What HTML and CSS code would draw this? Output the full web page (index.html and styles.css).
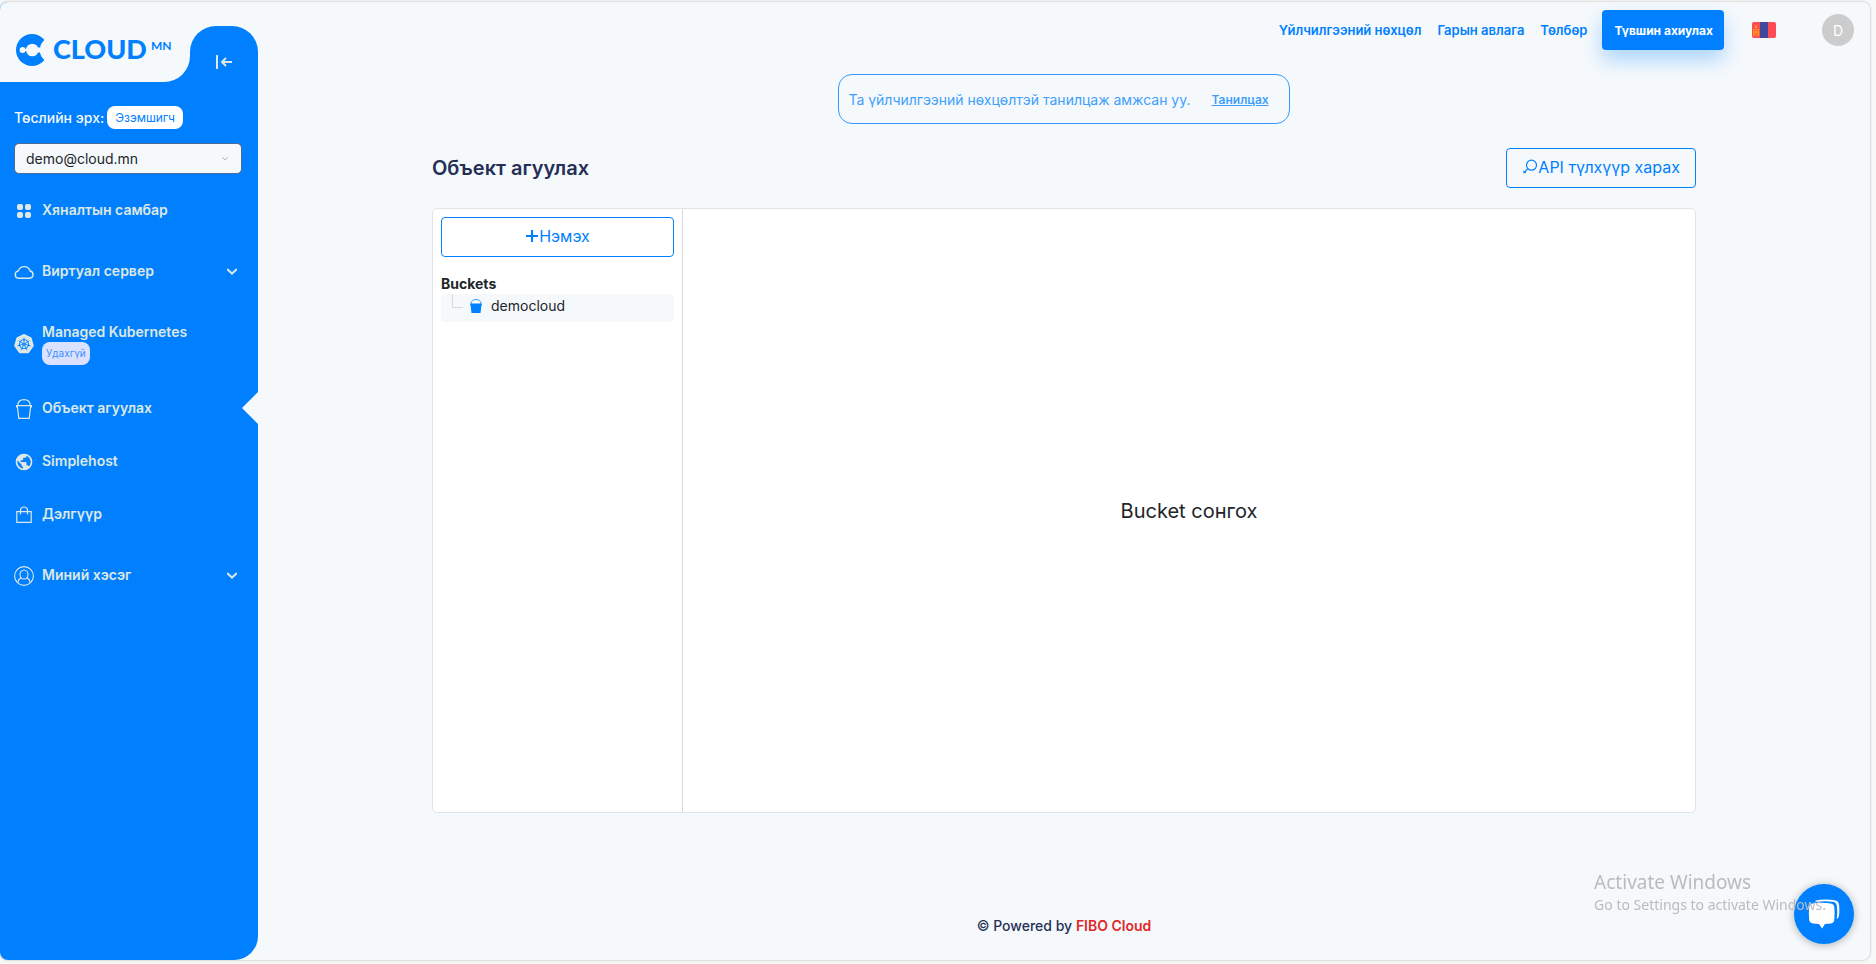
FILE: index.html
```html
<!DOCTYPE html>
<html lang="mn">
<head>
<meta charset="utf-8">
<meta name="viewport" content="width=device-width, initial-scale=1">
<title>Объект агуулах – Cloud.mn</title>
<link rel="stylesheet" href="styles.css">
</head>
<body>
<div class="frame">
  <aside class="sidebar">
    <div class="brand-row">
      <div class="brand-wrap">
        <a class="brand" href="#">
          <svg class="brand-mark" viewBox="0 0 30 32" width="30" height="32" aria-hidden="true">
            <circle cx="16" cy="16" r="16" fill="#0080ff"/>
            <g fill="#f5f9fc"><circle cx="37" cy="16" r="13.200"/><circle cx="16.300" cy="16" r="6.300"/><circle cx="6.600" cy="16" r="3"/><path d="M21 13.500h3v5h-3zM9 15h2v2H9z"/></g>
          </svg>
          <span class="brand-name">CLOUD</span><span class="brand-tld">MN</span>
        </a>
      </div>
      <div class="tab-wrap">
        <button class="collapse" type="button" aria-label="Цэс хураах">
          <svg viewBox="0 0 16 14" width="16" height="14" fill="none" stroke="#dde8e4" stroke-width="2"><path d="M1 0v14M16 7H6M10 3L6 7l4 4"/></svg>
        </button>
      </div>
    </div>
    <div class="side-body">
      <div class="project">
        <div class="role"><span>Төслийн эрх:</span><span class="role-badge">Эзэмшигч</span></div>
        <div class="select-wrap">
          <select class="select" aria-label="Төсөл"><option>demo@cloud.mn</option></select>
          <svg class="select-arrow" viewBox="0 0 8 6" width="8" height="6" fill="none" stroke="#b4b8bc" stroke-width="1"><path d="M1 1l3 3 3-3"/></svg>
        </div>
      </div>
      <nav class="menu">
        <a class="item" href="#">
          <span class="icon"><svg viewBox="0 0 20 20" width="20" height="20" fill="currentColor"><rect x="3" y="3" width="6" height="6" rx="2"/><rect x="11" y="3" width="6" height="6" rx="2"/><rect x="3" y="11" width="6" height="6" rx="2"/><rect x="11" y="11" width="6" height="6" rx="2"/></svg></span>
          <span class="label">Хяналтын самбар</span>
        </a>
        <button class="item item-group" type="button">
          <span class="icon"><svg viewBox="0 0 20 20" width="20" height="20" fill="none" stroke="currentColor" stroke-width="1.400"><path d="M4.500 16.300h11.200a3.700 3.700 0 0 0 .4-7.300 A6.200 6.200 0 0 0 4.300 8.900 A3.750 3.750 0 0 0 4.500 16.300z"/></svg></span>
          <span class="label">Виртуал сервер</span>
          <svg class="chev" viewBox="0 0 10 7" width="10" height="7" fill="none" stroke="currentColor" stroke-width="2"><path d="M0 1l5 4.600L10 1"/></svg>
        </button>
        <a class="item item-tall" href="#">
          <span class="icon"><svg viewBox="0 0 20 20" width="20" height="20"><path fill="currentColor" d="M9.300.3a1.500 1.500 0 0 1 1.400 0l6.200 3a1.500 1.500 0 0 1 .8 1l2 7a1.500 1.500 0 0 1-.3 1.200l-4.400 6.300a1.500 1.500 0 0 1-1.100.5H6.100a1.500 1.500 0 0 1-1.100-.5L.6 12.500a1.500 1.500 0 0 1-.3-1.200l2-7a1.500 1.500 0 0 1 .8-1z"/><g fill="none" stroke="#0080ff" stroke-width="1.100"><circle cx="10" cy="10.300" r="4.500"/><circle cx="10" cy="10.300" r="1"/><path stroke-width=".9" d="M10 9.300V3.600M10.800 9.700l4.500-3M11 10.500l5.500 1.300M10.500 11.200l2.500 5M9.500 11.200l-2.500 5M9 10.500l-5.500 1.300M9.200 9.700l-4.500-3"/></g></svg></span>
          <span class="label">Managed Kubernetes<span class="soon">Удахгүй</span></span>
        </a>
        <a class="item item-active" href="#" aria-current="page">
          <span class="icon"><svg viewBox="0 0 20 20" width="20" height="20" fill="none" stroke="currentColor" stroke-width="1.200"><path d="M2.600 6.600h14.800v1.200h-.8L15.200 19.400H4.800L3.400 7.800h-.8zM3.600 6.400C4 2.600 6.800.6 10 .6s6 2 6.400 5.800"/></svg></span>
          <span class="label">Объект агуулах</span>
        </a>
        <a class="item" href="#">
          <span class="icon"><svg viewBox="0 0 24 24" width="20" height="20" fill="currentColor"><path fill-rule="evenodd" d="M12 2a10 10 0 1 0 0 20 10 10 0 0 0 0-20zM15 4.600A8 8 0 0 1 17.900 17.390C17.600 16.600 16.900 16 16 16h-1v-3a1 1 0 0 0-1-1H8v-2h2a1 1 0 0 0 1-1V7h2a2 2 0 0 0 2-2zM4.200 10.200L9 15v1a2 2 0 0 0 2 2v1.900A8 8 0 0 1 4.200 10.200z"/></svg></span>
          <span class="label">Simplehost</span>
        </a>
        <a class="item" href="#">
          <span class="icon"><svg viewBox="0 0 20 20" width="20" height="20" fill="none" stroke="currentColor" stroke-width="1.200"><path d="M2.800 6.600h14.400v10.800H2.800zM6.500 9.500V5.500a3.500 3.500 0 0 1 7 0V9.500"/></svg></span>
          <span class="label">Дэлгүүр</span>
        </a>
        <button class="item item-group" type="button">
          <span class="icon"><svg viewBox="0 0 20 20" width="20" height="20" fill="none" stroke="currentColor" stroke-width="1.100"><circle cx="10" cy="10" r="9.400"/><ellipse cx="10" cy="8.500" rx="4" ry="4.500"/><path d="M3.800 16.800c.3-2.800 1.800-4.300 3.600-5M16.200 16.800c-.3-2.800-1.800-4.300-3.600-5"/></svg></span>
          <span class="label">Миний хэсэг</span>
          <svg class="chev" viewBox="0 0 10 7" width="10" height="7" fill="none" stroke="currentColor" stroke-width="2"><path d="M0 1l5 4.600L10 1"/></svg>
        </button>
      </nav>
    </div>
  </aside>

  <div class="page">
    <header class="topbar">
      <nav class="links">
        <a href="#">Үйлчилгээний нөхцөл</a>
        <a href="#">Гарын авлага</a>
        <a href="#">Төлбөр</a>
      </nav>
      <button class="upgrade" type="button">Түвшин ахиулах</button>
      <button class="lang" type="button" aria-label="Монгол">
        <svg viewBox="0 0 24 16" width="24" height="16"><rect width="24" height="16" rx="2" fill="#ff4b55"/><rect x="8" width="8" height="16" fill="#41479b"/><g fill="#ff9b0d"><circle cx="4" cy="5" r="1.300"/><path d="M4 2l.8 1.700H3.200zM1 7h1.500v7H1zM5.500 7H7v7H5.500zM3 7h2v1H3zM3 12.500h2v1H3z"/><circle cx="4" cy="10.200" r="1.400"/></g></svg>
      </button>
      <button class="avatar" type="button">D</button>
    </header>

    <main class="content">
      <div class="notice">
        <span>Та үйлчилгээний нөхцөлтэй танилцаж амжсан уу.</span>
        <a href="#">Танилцах</a>
      </div>
      <div class="heading">
        <h1>Объект агуулах</h1>
        <button class="outline" type="button">
          <svg viewBox="0 0 16 16" width="16" height="16" fill="none" stroke="currentColor" stroke-width="1.200"><circle cx="9.500" cy="6.200" r="5"/><path d="M5.900 9.700L1.400 14.200M1.600 12l2.200 2.200"/></svg>API түлхүүр харах
        </button>
      </div>
      <section class="panel">
        <div class="buckets">
          <button class="outline" type="button">
            <svg viewBox="0 0 14 14" width="14" height="14" fill="none" stroke="currentColor" stroke-width="2"><path d="M7 1v12M1 7h12"/></svg>Нэмэх
          </button>
          <h2>Buckets</h2>
          <ul class="tree">
            <li>
              <span class="branch"></span>
              <svg viewBox="0 0 12 14" width="12" height="14"><path fill="none" stroke="#0080ff" stroke-width=".8" d="M1 4.500C1.500 1.500 3.500.5 6 .5s4.500 1 5 4"/><path fill="#0080ff" d="M0 4.500h12v1.300h-.5L10.500 14h-9L.5 5.800H0z"/></svg>
              <a href="#">democloud</a>
            </li>
          </ul>
        </div>
        <div class="empty">Bucket сонгох</div>
      </section>
    </main>
    <footer class="footer">© Powered by <a href="#">FIBO Cloud</a></footer>
  </div>
</div>
<button class="chat" type="button" aria-label="Чат">
  <svg viewBox="0 0 32 30" width="32" height="30"><path fill="#fff" d="M4 4.500Q13 3 23 4.500Q26 5 26.300 8Q27 14 26.300 21Q26 24 23 24.400L17 25l-3 4.500L11 25l-6-.6Q1.600 24 1.200 21Q.4 14 1.200 8Q1.500 5 4 4.500z"/><path fill="#fff" d="M7.500 1.500Q17-.3 26.500 1.200Q30.500 1.800 31 5.500Q31.700 11 31 16.500Q30.600 19 28.700 20Q29.800 12 28.700 6.500Q28.200 3.500 25 2.800Q17 1.500 7.500 2.800z"/></svg>
</button>
<div class="watermark"><p class="wm-title">Activate Windows</p><p>Go to Settings to activate Windows.</p></div>
</body>
</html>
```

FILE: styles.css
```css
* { box-sizing: border-box; }

body {
  margin: 0;
  background: #f8f8f8;
  font-family: Inter, "Liberation Sans", sans-serif;
  font-size: 14px;
  color: #212529;
}

a { color: inherit; text-decoration: none; }

button {
  border: 0;
  padding: 0;
  background: none;
  color: inherit;
  font: inherit;
  cursor: pointer;
}

h1, h2, p, ul { margin: 0; padding: 0; }

.frame {
  display: flex;
  min-height: calc(100vh - 6px);
  margin: 2px 6px 4px 0;
  border-radius: 8px;
  background: #f5f9fc;
  box-shadow: 0 0 3px rgba(0, 0, 0, 0.25);
  overflow: hidden;
}

/* Sidebar */
.sidebar {
  flex: 0 0 258px;
  display: flex;
  flex-direction: column;
}

.brand-row { display: flex; height: 80px; }
.brand-wrap { flex: 0 0 190px; background: #0080ff; }

.brand {
  display: flex;
  align-items: center;
  height: 100%;
  padding: 16px 0 0 16px;
  border-bottom-right-radius: 26px;
  background: #f5f9fc;
  color: #0080ff;
}

.brand-name {
  margin-left: 7px;
  padding-bottom: 2px;
  font: 900 27px/32px Lato, sans-serif;
}

.brand-tld {
  align-self: flex-start;
  margin: 20px 0 0 4px;
  font: 700 12px/16px Lato, sans-serif;
}

.tab-wrap { flex: 1; padding-top: 24px; }

.collapse {
  display: flex;
  align-items: center;
  justify-content: center;
  width: 100%;
  height: 100%;
  padding-top: 16px;
  border-radius: 26px 26px 0 0;
  background: #0080ff;
}

.side-body {
  flex: 1;
  border-bottom-right-radius: 24px;
  background: #0080ff;
  color: #dde8e4;
}

.project { padding: 24px 16px 10px 14px; }

.role {
  display: flex;
  align-items: center;
  gap: 3px;
  height: 23px;
  color: #f5f9fc;
  font-weight: 500;
  line-height: 22px;
}

.role-badge {
  padding: 0 8px;
  border-radius: 8px;
  background: #fff;
  color: #0080ff;
  font-size: 12px;
  font-weight: 400;
  line-height: 23px;
}

.select-wrap { position: relative; margin-top: 14px; }

.select {
  display: block;
  width: 100%;
  height: 31px;
  padding: 0 11px;
  appearance: none;
  border: 1px solid #4a6a92;
  border-radius: 5px;
  background: #f5f9fc;
  color: #212529;
  font: 400 14px/20px Inter, sans-serif;
}

.select-arrow {
  position: absolute;
  top: 13px;
  right: 13px;
  pointer-events: none;
}

.item {
  position: relative;
  display: flex;
  align-items: center;
  gap: 8px;
  width: 100%;
  height: 53px;
  padding: 0 21px 0 14px;
  font-weight: 600;
  line-height: 20px;
  text-align: left;
}

.icon { flex: 0 0 20px; height: 20px; }
.label { flex: 1; padding-bottom: 2px; }
.item-group { height: 69px; }
.item-tall { height: 76px; }

.soon {
  display: block;
  width: fit-content;
  padding: 0 4px;
  border-radius: 8px;
  background: #dbe2ff;
  color: #3d8fff;
  font-size: 10px;
  font-weight: 400;
  line-height: 23px;
}

.item-active::after {
  content: "";
  position: absolute;
  top: 10px;
  right: 0;
  border: 16px solid transparent;
  border-left-width: 0;
  border-right-color: #f5f9fc;
}

/* Page */
.page {
  flex: 1;
  min-width: 0;
  display: flex;
  flex-direction: column;
}

.topbar {
  display: flex;
  align-items: center;
  justify-content: flex-end;
  height: 56px;
  padding: 0 16px 0 0;
  color: #0080ff;
}

.links {
  display: flex;
  gap: 16px;
  font-size: 13px;
  font-weight: 600;
}

.upgrade {
  height: 40px;
  margin: 0 28px 0 15px;
  padding: 0 11px 0 12px;
  border-radius: 4px;
  background: #0080ff;
  box-shadow: 0 10px 20px rgba(0, 128, 255, 0.3);
  color: #fff;
  font-size: 12px;
  font-weight: 700;
}

.lang { height: 16px; line-height: 0; margin-right: 46px; }

.avatar {
  width: 32px;
  height: 32px;
  border-radius: 50%;
  background: #ccc;
  color: #fff;
}

.content {
  flex: 1;
  display: flex;
  flex-direction: column;
  width: 100%;
  max-width: 1264px;
  margin: 0 auto;
  padding-top: 16px;
}

.notice {
  align-self: center;
  display: flex;
  align-items: center;
  gap: 21px;
  height: 50px;
  padding: 0 20px 0 9px;
  border: 1px solid #3399ff;
  border-radius: 14px;
  color: #3f9ffb;
}

.notice a {
  font-size: 12px;
  font-weight: 600;
  text-decoration: underline;
}

.heading {
  display: flex;
  align-items: center;
  justify-content: space-between;
  margin: 24px 0 20px;
}

h1 { color: #252f56; font-size: 20px; font-weight: 600; }

.outline {
  display: flex;
  align-items: center;
  justify-content: center;
  height: 40px;
  padding: 0 15px 2px;
  border: 1px solid #0080ff;
  border-radius: 4px;
  color: #0080ff;
  font-size: 16px;
}

.panel {
  flex: 1;
  display: flex;
  border: 1px solid #e1e4e9;
  border-radius: 5px;
  background: #fff;
}

.buckets {
  flex: 0 0 250px;
  padding: 8px;
  border-right: 1px solid #d9d9d9;
}

.buckets .outline { width: 100%; }

h2 {
  margin-top: 17px;
  font-size: 14px;
  font-weight: 700;
  line-height: 20px;
}

.tree { list-style: none; }

.tree li {
  display: flex;
  height: 28px;
  padding: 0 11px;
  border-radius: 4px;
  background: #f5f9fc;
}

.branch {
  width: 11px;
  height: 14px;
  border: solid #d9d9d9;
  border-width: 0 0 1px 1px;
}

.tree svg { margin: 5px 9px 0 7px; }
.tree a { line-height: 24px; }

.empty {
  flex: 1;
  display: flex;
  align-items: center;
  justify-content: center;
  font-size: 20px;
}

.footer {
  padding: 103px 0 24px;
  color: #252f56;
  line-height: 20px;
  text-align: center;
  font-weight: 500;
}

.footer a { color: #e02828; font-weight: 600; }

/* Floating layer */
.chat {
  position: fixed;
  right: 22px;
  bottom: 20px;
  display: flex;
  align-items: center;
  justify-content: center;
  width: 60px;
  height: 60px;
  border-radius: 50%;
  background: #0080ff;
  box-shadow: 0 1px 8px rgba(0, 0, 0, 0.3);
}

.watermark {
  position: fixed;
  right: 50px;
  bottom: 49px;
  color: #b9bcbe;
  font: 400 14px/20px "Noto Sans", sans-serif;
  pointer-events: none;
}

.wm-title { font-size: 19px; line-height: 26px; }
```
